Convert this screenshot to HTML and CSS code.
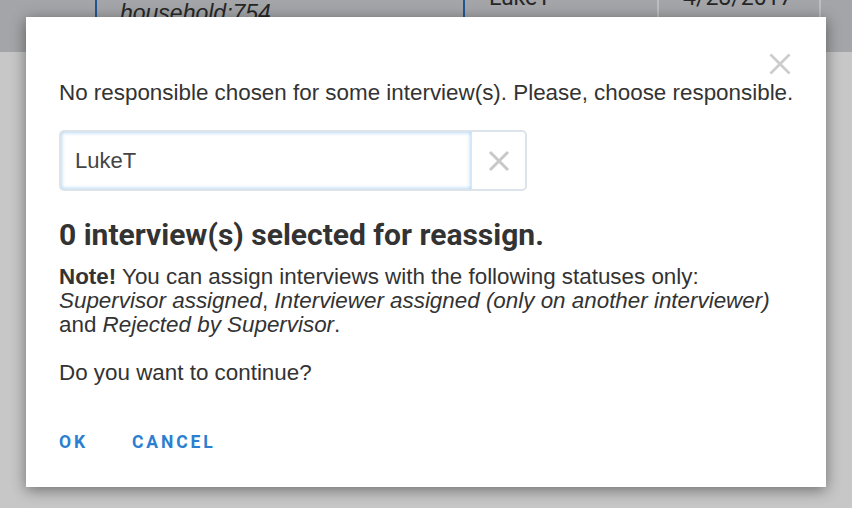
FILE: index.html
```html
<!DOCTYPE html>
<html>
<head>
<meta charset="utf-8">
<link rel="stylesheet" href="styles.css">
</head>
<body>
<div class="page">
  <div class="table-row">
    <div class="cell c1"></div>
    <div class="cell c2"><span class="key">household:754</span></div>
    <div class="cell c3"><span class="resp">LukeT</span></div>
    <div class="cell c4"><span class="date">4/28/2017</span></div>
    <div class="cell c5"></div>
  </div>
  <div class="rest"></div>
</div>
<div class="overlay">
  <div class="dialog">
    <div class="close-row"><span class="close">
      <svg width="22" height="22" viewBox="0 0 22 22"><path d="M1.5 1.5L20.5 20.5M20.5 1.5L1.5 20.5" stroke="#cccccc" stroke-width="2.6"/></svg>
    </span></div>
    <p class="lead">No responsible chosen for some interview(s). Please, choose responsible.</p>
    <div class="picker">
      <div class="picker-input">LukeT</div>
      <div class="picker-clear">
        <svg width="22" height="22" viewBox="0 0 22 22"><path d="M2 2L20 20M20 2L2 20" stroke="#c8c8c8" stroke-width="3"/></svg>
      </div>
    </div>
    <h2 class="count">0 interview(s) selected for reassign.</h2>
    <p class="note"><b>Note!</b> You can assign interviews with the following statuses only:<br><i>Supervisor assigned</i>, <i>Interviewer assigned (only on another interviewer)</i><br>and <i>Rejected by Supervisor</i>.</p>
    <p class="question">Do you want to continue?</p>
    <div class="actions">
      <button class="btn">OK</button>
      <button class="btn">CANCEL</button>
    </div>
  </div>
</div>
</body>
</html>
```
FILE: styles.css
```css
html, body {
  margin: 0;
  padding: 0;
  width: 852px;
  height: 508px;
  overflow: hidden;
  font-family: "Liberation Sans", Arial, sans-serif;
}
.page {
  width: 852px;
  height: 508px;
  background: #fff;
  display: flex;
  flex-direction: column;
}
.table-row {
  height: 52px;
  display: flex;
  background: #d1d4d8;
}
.cell {
  font-size: 23px;
  color: #333;
  overflow: hidden;
}
.c1 { width: 95px; }
.c2 { width: 366px; border-left: 2px solid #2a6fc0; }
.c3 { width: 192px; border-left: 2px solid #2a6fc0; }
.c4 { width: 160px; border-left: 2px solid #f4f4f4; }
.c5 { flex: 1; border-left: 2px solid #f4f4f4; }
.key { display: block; padding-left: 23px; margin-top: 0; font-style: italic; line-height: 26px; }
.resp { display: block; padding-left: 24px; margin-top: -15px; line-height: 26px; font-family: Roboto, sans-serif; }
.date { display: block; padding-left: 24px; margin-top: -15px; line-height: 26px; font-family: Roboto, sans-serif; }
.rest { flex: 1; background: #ffffff; }
.overlay {
  position: absolute;
  left: 0; top: 0;
  width: 852px;
  height: 508px;
  background: rgba(0, 0, 0, 0.22);
}
.dialog {
  position: absolute;
  left: 26px;
  top: 17px;
  width: 800px;
  height: 470px;
  box-sizing: border-box;
  background: #fff;
  box-shadow: 0 3px 14px rgba(0,0,0,0.45);
  padding: 0 33px;
  color: #333;
}
.close-row {
  height: 64px;
  display: flex;
  justify-content: flex-end;
  align-items: flex-end;
}
.close {
  display: flex;
  margin-right: 2px;
  margin-bottom: 6px;
}
.lead {
  margin: 0;
  font-size: 22.4px;
  line-height: 24px;
  white-space: nowrap;
}
.picker {
  margin-top: 25px;
  width: 468px;
  height: 61px;
  display: flex;
  box-sizing: border-box;
  border: 2px solid #dde3ea;
  border-radius: 5px;
  overflow: hidden;
}
.picker-input {
  flex: 1;
  display: flex;
  align-items: center;
  padding-left: 14px;
  font-size: 22px;
  color: #444;
  box-shadow: inset 0 0 4px rgba(102,175,233,0.7);
  border-right: 1px solid #dce6f0;
}
.picker-clear {
  width: 53px;
  display: flex;
  align-items: center;
  justify-content: center;
}
.count {
  margin: 27px 0 0 0;
  font-family: Roboto, sans-serif;
  font-weight: 700;
  font-size: 30px;
  line-height: 34px;
  color: #333;
}
.note {
  margin: 13px 0 0 0;
  font-size: 22.4px;
  line-height: 24px;
}
.question {
  margin: 24px 0 0 0;
  font-size: 22.4px;
  line-height: 24px;
}
.actions {
  margin-top: 47px;
  display: flex;
  gap: 44px;
}
.btn {
  border: 0;
  background: none;
  padding: 0;
  font-family: Roboto, sans-serif;
  font-weight: 700;
  font-size: 17.5px;
  letter-spacing: 2.9px;
  color: #2c7fd0;
  cursor: pointer;
}
```
